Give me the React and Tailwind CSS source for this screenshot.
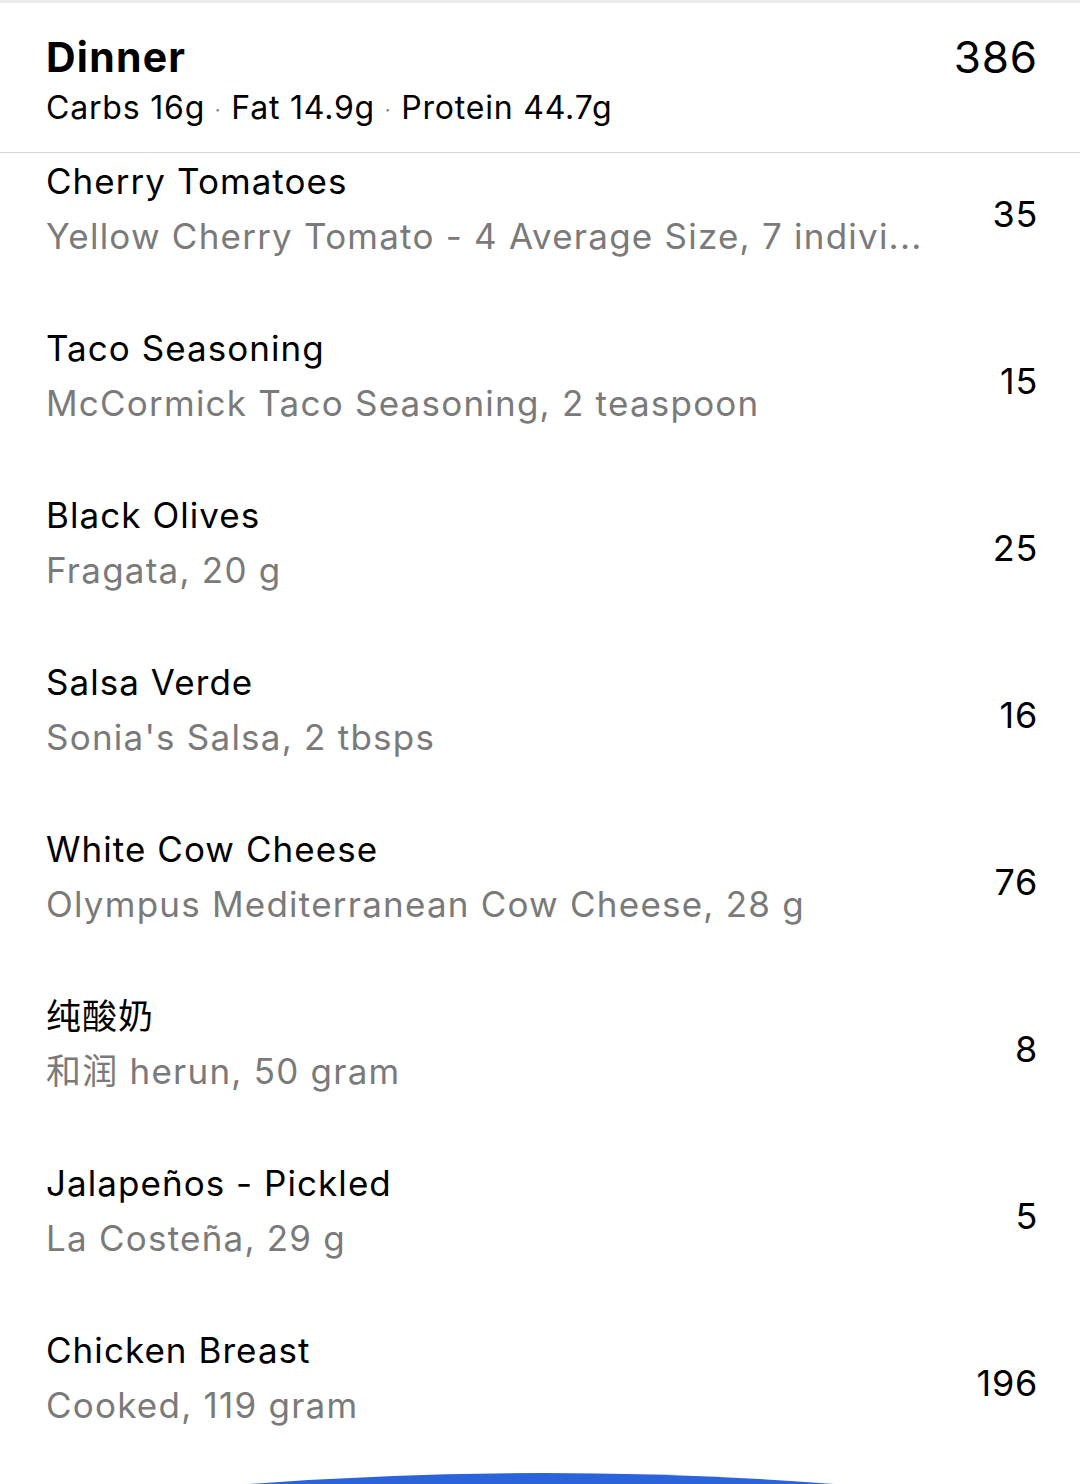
import React from "react";

const items = [
  { name: "Cherry Tomatoes", desc: "Yellow Cherry Tomato - 4 Average Size, 7 indivi...", cal: "35" },
  { name: "Taco Seasoning", desc: "McCormick Taco Seasoning, 2 teaspoon", cal: "15" },
  { name: "Black Olives", desc: "Fragata, 20 g", cal: "25" },
  { name: "Salsa Verde", desc: "Sonia's Salsa, 2 tbsps", cal: "16" },
  { name: "White Cow Cheese", desc: "Olympus Mediterranean Cow Cheese, 28 g", cal: "76" },
  { name: "纯酸奶", desc: "和润 herun, 50 gram", cal: "8" },
  { name: "Jalapeños - Pickled", desc: "La Costeña, 29 g", cal: "5" },
  { name: "Chicken Breast", desc: "Cooked, 119 gram", cal: "196" },
];

export default function App() {
  return (
    <div
      className="relative w-[1080px] h-[1484px] bg-white overflow-hidden flex flex-col"
      style={{ fontFamily: 'Inter, "Noto Sans CJK SC", sans-serif' }}
    >
      <div className="h-[3px] shrink-0 bg-[#ebebeb]" />
      <div className="h-[150px] shrink-0 border-b border-[#d9d9d9] flex justify-between pl-[46px] pr-[42px]">
        <div className="flex flex-col pt-[30px]">
          <div className="text-[41px] leading-[48px] font-bold text-black tracking-[0.03em]">Dinner</div>
          <div className="text-[32px] leading-[40px] text-black mt-[7px] tracking-[0.025em]">
            Carbs 16g <span className="text-[#888] text-[20px] align-middle">·</span> Fat 14.9g{" "}
            <span className="text-[#888] text-[20px] align-middle">·</span> Protein 44.7g
          </div>
        </div>
        <div className="text-[44px] leading-[48px] text-black pt-[30px] tracking-[0.02em]">386</div>
      </div>
      {items.map((it) => (
        <div key={it.name} className="h-[167px] shrink-0 flex items-start pl-[46px] pr-[42px] pt-[8px]">
          <div className="flex-1 min-w-0 flex flex-col">
            <div className="text-[35px] leading-[40px] text-black tracking-[0.03em] whitespace-nowrap">{it.name}</div>
            <div className="text-[35px] leading-[40px] text-[#7a7a7a] tracking-[0.035em] mt-[15px] whitespace-nowrap">{it.desc}</div>
          </div>
          <div className="text-[36px] leading-[40px] text-black pt-[33px] tracking-[0.02em]">{it.cal}</div>
        </div>
      ))}
      <svg width="1080" height="12" className="absolute left-0 bottom-0 block">
        <path d="M249 12 Q541 -10 834 12 Z" fill="#2b63db" />
      </svg>
    </div>
  );
}
